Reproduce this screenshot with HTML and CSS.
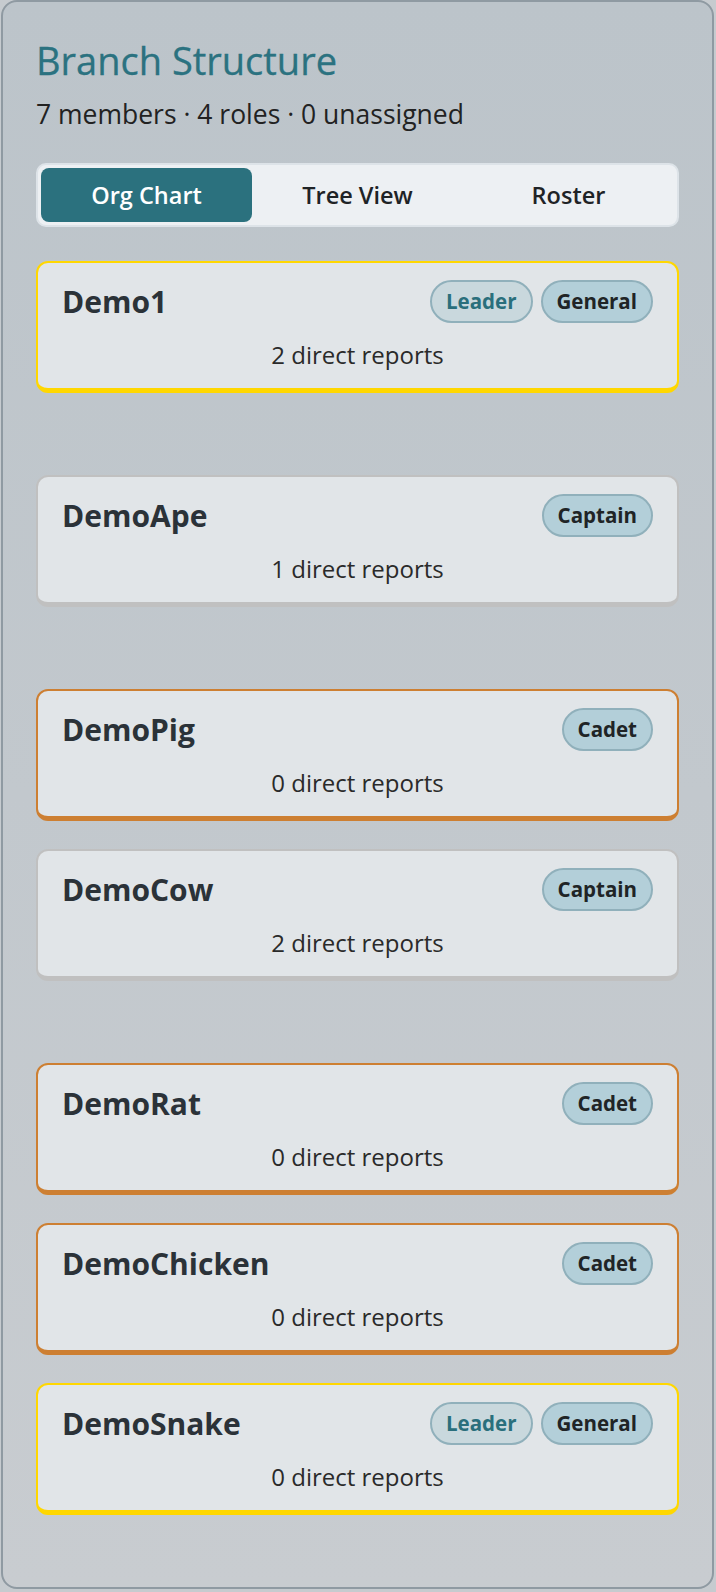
FILE: index.html
```html
<!DOCTYPE html>
<html lang="en">
<head>
  <meta charset="UTF-8">
  <meta name="viewport" content="width=device-width, initial-scale=1.0">
  <title>Branch Structure</title>
  <link rel="stylesheet" href="styles.css">
</head>
<body>
  <div class="panel">
    <h1>Branch Structure</h1>
    <p class="summary">7 members · 4 roles · 0 unassigned</p>

    <div class="tabs">
      <button class="tab active">Org Chart</button>
      <button class="tab">Tree View</button>
      <button class="tab">Roster</button>
    </div>

    <div class="chart">
      <div class="level">
        <div class="card gold">
          <div class="card-head">
            <span class="name">Demo1</span>
            <span class="badges"><span class="badge leader">Leader</span><span class="badge">General</span></span>
          </div>
          <div class="reports">2 direct reports</div>
        </div>
      </div>

      <div class="level">
        <div class="card silver">
          <div class="card-head">
            <span class="name">DemoApe</span>
            <span class="badges"><span class="badge">Captain</span></span>
          </div>
          <div class="reports">1 direct reports</div>
        </div>
      </div>

      <div class="level">
        <div class="card bronze">
          <div class="card-head">
            <span class="name">DemoPig</span>
            <span class="badges"><span class="badge">Cadet</span></span>
          </div>
          <div class="reports">0 direct reports</div>
        </div>
        <div class="card silver">
          <div class="card-head">
            <span class="name">DemoCow</span>
            <span class="badges"><span class="badge">Captain</span></span>
          </div>
          <div class="reports">2 direct reports</div>
        </div>
      </div>

      <div class="level">
        <div class="card bronze">
          <div class="card-head">
            <span class="name">DemoRat</span>
            <span class="badges"><span class="badge">Cadet</span></span>
          </div>
          <div class="reports">0 direct reports</div>
        </div>
        <div class="card bronze">
          <div class="card-head">
            <span class="name">DemoChicken</span>
            <span class="badges"><span class="badge">Cadet</span></span>
          </div>
          <div class="reports">0 direct reports</div>
        </div>
        <div class="card gold">
          <div class="card-head">
            <span class="name">DemoSnake</span>
            <span class="badges"><span class="badge leader">Leader</span><span class="badge">General</span></span>
          </div>
          <div class="reports">0 direct reports</div>
        </div>
      </div>
    </div>
  </div>
</body>
</html>
```

FILE: styles.css
```css
body {
  margin: 0;
  font-family: 'Open Sans', 'Noto Sans', sans-serif;
  background: #c6cbcf;
  color: #222;
}
.panel {
  margin: 0 2px 2px 1px;
  padding: 36px 33px 72px;
  border: 2px solid #8f9aa2;
  border-radius: 16px;
  background: linear-gradient(180deg, #bcc4ca, #c8ccd0);
}
h1 {
  margin: 0;
  font-size: 38px;
  font-weight: 500;
  line-height: 1.2;
  color: #2b7280;
  -webkit-text-stroke: 0.3px #2b7280;
}
.summary {
  margin: 13px 0 0;
  font-size: 26.5px;
  line-height: 34px;
  color: #222;
}
.tabs {
  display: grid;
  grid-template-columns: 1fr 1fr 1fr;
  margin-top: 32px;
  padding: 3px;
  background: #edf0f3;
  border: 2px solid #dde3e8;
  border-radius: 10px;
}
.tab {
  padding: 12px 0;
  font-family: inherit;
  font-size: 23.5px;
  font-weight: 600;
  line-height: 30px;
  color: #1f2326;
  background: none;
  border: none;
  border-radius: 8px;
}
.tab.active {
  background: #2b717e;
  color: #fff;
}
.chart {
  margin-top: 34px;
}
.level {
  display: flex;
  flex-direction: column;
  gap: 28px;
}
.level + .level {
  margin-top: 82px;
}
.card {
  padding: 17px 24px 16px;
  background: #e1e5e8;
  border: 2px solid;
  border-bottom-width: 5px;
  border-radius: 12px;
}
.gold { border-color: #ffd700; }
.silver { border-color: #c0c0c0; }
.bronze { border-color: #cd7f32; }
.card-head {
  display: flex;
  justify-content: space-between;
  align-items: center;
}
.name {
  font-size: 30px;
  font-weight: 700;
  color: #2b3238;
}
.badges {
  display: flex;
  gap: 8px;
}
.badge {
  padding: 6px 14px;
  font-size: 20.5px;
  font-weight: 700;
  line-height: 27px;
  color: #202426;
  background: #b3cfd9;
  border: 2px solid #90b0bb;
  border-radius: 22px;
}
.badge.leader {
  background: #c9d8dd;
  color: #2a6f7c;
}
.reports {
  margin-top: 15px;
  text-align: center;
  font-size: 24px;
  line-height: 34px;
  color: #2a2a2a;
}
```
